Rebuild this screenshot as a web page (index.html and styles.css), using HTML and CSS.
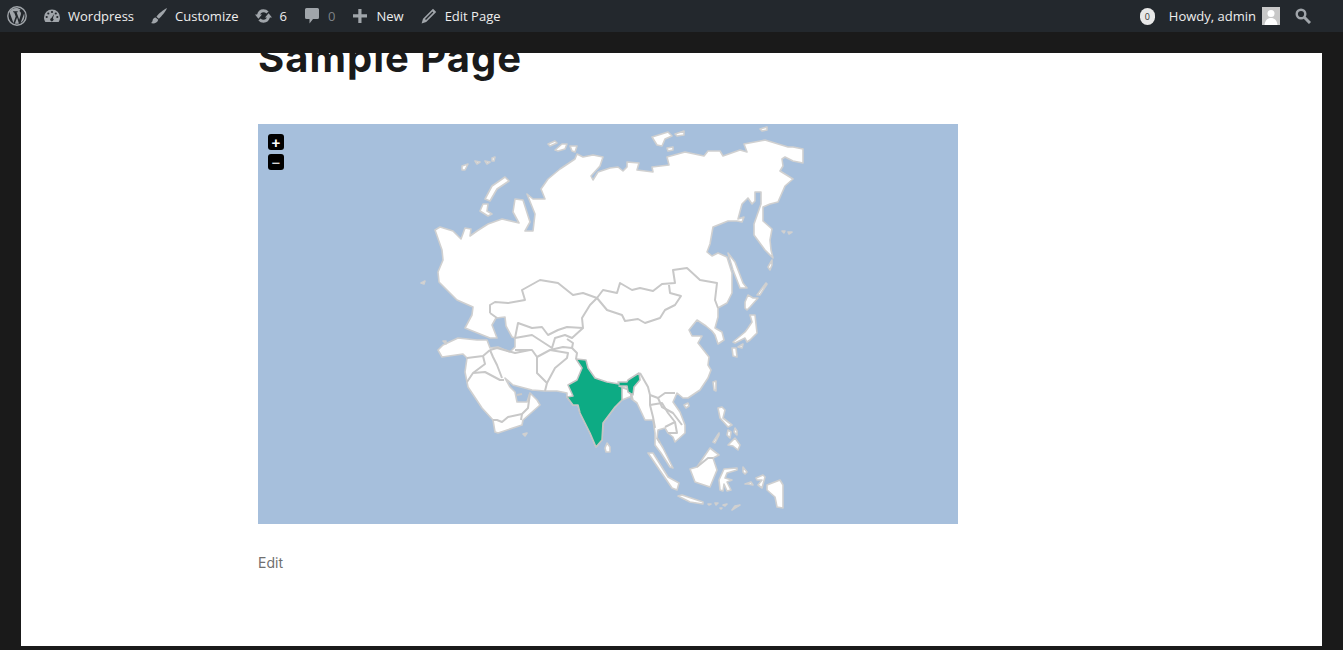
FILE: index.html
```html
<!DOCTYPE html>
<html lang="en">
<head>
    <meta charset="UTF-8">
    <meta name="viewport" content="width=device-width, initial-scale=1.0">
    <title>Sample Page</title>
    <link rel="stylesheet" href="styles.css">
</head>
<body>
    <!-- Admin bar -->
    <div class="adminbar">
        <div class="bar-group">
            <a class="bar-logo">
                <svg class="icon-logo" viewBox="0 0 20 20"><circle cx="10" cy="10" r="9.2" fill="none" stroke="#a0a5aa" stroke-width="1.4"/><path fill="#a0a5aa" d="M2.6 6.6 6.4 17l2.3-6.4-1.6-4.3-1-.1v-.9h4.6v.9l-1.1.1 2.6 7.4 1.5-4.7c.6-1.8.2-2.9-.9-3.6-.4-.4-.3-1.5.9-1.7-1.3-1.100-2.900-1.600-4.700-1.600-2.700 0-5 1.300-6.400 3.500zM17.200 7.200l-3.600 9.700c2.300-1.300 3.800-3.900 3.800-6.700 0-1.100-.1-2.100-.2-3zM10.100 11.400l-2.200 6.200c1.300.4 2.700.3 4-.1z"/></svg>
            </a>
            <a class="bar-item">
                <svg class="icon" viewBox="0 0 16 16"><path fill="#a0a5aa" d="M8 1.500a8 8 0 0 0-8 8c0 1.700.5 3 1.400 4.500h13.200c.9-1.500 1.400-2.800 1.400-4.500a8 8 0 0 0-8-8z"/><g fill="#23282d"><circle cx="8" cy="4" r="1.100"/><circle cx="4.300" cy="5.500" r="1.100"/><circle cx="2.700" cy="9" r="1.100"/><circle cx="13.300" cy="9" r="1.100"/><circle cx="11.800" cy="5.500" r="1.100"/><path d="M10.300 5.800 8.900 10.200a1.700 1.700 0 1 1-1.500-.3z"/></g></svg>
                <span>Wordpress</span>
            </a>
            <a class="bar-item">
                <svg class="icon" viewBox="0 0 17 17"><path fill="#a0a5aa" d="M17 0C13 2 8 6 5.800 9.300l2.600 2.200C11 9 15.500 4 17 0zM5 10.200c-2 .2-3 1.400-3.300 3.200-.2 1.300-.8 2-1.700 2.600 2.500.8 6.700.4 7.700-3.500z"/></svg>
                <span>Customize</span>
            </a>
            <a class="bar-item">
                <svg class="icon icon-update" viewBox="0 0 17 16"><g fill="none" stroke="#a0a5aa" stroke-width="3"><path d="M3.500 7.200C4 4.500 6 2.800 8.500 2.800c1.700 0 3 .7 4 1.800"/><path d="M13.500 8.800C13 11.500 11 13.200 8.500 13.200c-1.700 0-3-.7-4-1.800"/></g><path fill="#a0a5aa" d="M0 6.500h7L3.400 10.800zM17 9.500h-7l3.600-4.300z"/></svg>
                <span>6</span>
            </a>
            <a class="bar-item">
                <svg class="icon" viewBox="0 0 16 16"><path fill="#a0a5aa" d="M2.500 0h11A1.500 1.500 0 0 1 15 1.500v8a1.500 1.500 0 0 1-1.500 1.500H9l-3.500 4.500V11h-3A1.500 1.500 0 0 1 1 9.500v-8A1.500 1.500 0 0 1 2.500 0z"/></svg>
                <span class="muted">0</span>
            </a>
            <a class="bar-item">
                <svg class="icon" viewBox="0 0 16 16"><path fill="#a0a5aa" d="M6.300 1h3.200v5.300H15v3.200H9.500V15H6.300V9.500H1V6.300h5.300z"/></svg>
                <span>New</span>
            </a>
            <a class="bar-item">
                <svg class="icon" viewBox="0 0 16 16"><path fill="#a0a5aa" d="M12 .8 15.200 4 5.200 14 .6 15.400 2 10.800zM11.400 3.600 4 11l1 1 7.400-7.400z"/></svg>
                <span>Edit Page</span>
            </a>
        </div>
        <div class="bar-group">
            <span class="bubble">0</span>
            <span class="howdy">Howdy, admin</span>
            <svg class="avatar" viewBox="0 0 18 18"><rect width="18" height="18" fill="#c8c8c8"/><circle cx="9" cy="6.500" r="3.500" fill="#fff"/><path fill="#fff" d="M2.500 18c.5-4.500 3-7 6.500-7s6 2.500 6.500 7z"/></svg>
            <svg class="icon-search" viewBox="0 0 16 16"><circle cx="6" cy="6" r="4.300" fill="none" stroke="#a0a5aa" stroke-width="2.400"/><path d="M9.500 9.500 15 15" stroke="#a0a5aa" stroke-width="3"/></svg>
        </div>
    </div>

    <!-- Page -->
    <div class="page">
        <div class="entry">
            <h1 class="entry-title">Sample Page</h1>

            <div class="map">
                <div class="zoom zoom-in">+</div>
                <div class="zoom zoom-out">&minus;</div>
                <svg class="map-svg" viewBox="258 124 700 400">
                    <g class="land">
                        <path d="M435 230 440 227 453 231 461 239 465 228 471 229 470 236 477 231 488 224 502 219 519 223 513 212 515 199 523 200 530 222 525 231 533 231 535 214 527 194 533 199 545 199 541 189 548 179 560 169 575 159 577 154 583 157 593 155 603 157 600 166 591 176 593 180 598 172 610 168 618 167 623 171 627 167 627 162 639 163 637 170 653 172 652 167 669 165 667 157 685 152 704 156 708 151 720 151 723 156 740 150 747 152 744 144 765 140 788 147 793 147 803 149 803 163 793 161 785 157 782 159 783 166 780 171 793 179 785 186 778 202 770 204 763 207 763 221 772 229 770 240 771 250 773 258 765 250 754 235 754 224 761 204 761 192 755 192 755 201 752 204 748 198 742 204 738 219 744 217 742 222 737 221 728 221 713 227 710 244 707 252 712 256 718 253 727 257 732 273 732 293 727 303 718 308 718 317 715 328 722 332 724 340 718 344 715 335 712 331 706 326 697 320 689 330 692 336 702 336 698 343 709 357 708 365 711 370 708 378 700 390 688 398 683 398 677 393 673 402 680 412 685 425 685 433 675 442 673 437 668 433 665 428 658 430 657 438 663 448 668 458 673 468 670 467 661 453 655 445 655 433 653 420 645 420 637 403 633 400 632 396 622 400 615 407 603 423 602 440 596 447 590 433 580 413 578 405 573 405 567 397 567 393 557 391 545 391 532 390 513 385 505 378 510 387 515 392 517 402 527 402 530 393 537 400 540 405 523 420 522 425 498 433 495 432 493 420 482 408 468 387 465 372 467 358 463 354 442 357 438 350 443 345 458 338 477 340 487 340 490 348 498 347 510 352 515 347 515 338 512 337 506 326 505 317 496 318 492 325 497 338 490 338 475 332 465 328 472 315 473 307 457 300 450 293 439 282 438 272 443 260 442 250z"/>
                        <!-- arctic islands -->
                        <path d="M485 199 492 186 505 177 509 181 497 189 490 201z"/>
                        <path d="M483 204 488 204 487 211 492 214 488 216 480 211z"/>
                        <path d="M462 166 468 164 465 170 462 170z"/>
                        <path d="M475 161 480 162 477 164z"/>
                        <path d="M485 161 490 162 487 164z"/>
                        <path d="M492 158 495 157 494 161 492 161z"/>
                        <path d="M548 144 555 141 557 143 550 146z"/>
                        <path d="M555 150 562 144 567 144 565 149 558 151z"/>
                        <path d="M570 146 577 146 575 152 572 151z"/>
                        <path d="M652 137 668 132 672 136 665 139 662 146 657 145z"/>
                        <path d="M675 134 684 131 684 135 677 136z"/>
                        <path d="M667 148 673 147 673 150 668 151z"/>
                        <path d="M760 129 767 127 767 130 762 131z"/>
                        <path d="M782 231 785 231 784 233z"/>
                        <path d="M788 232 792 232 789 234z"/>
                        <path d="M421 283 425 281 424 284z"/>
                        <path d="M443 341 446 341 446 344z"/>
                        <!-- japan and sakhalin -->
                        <path d="M728 253 735 262 743 283 747 288 740 288 733 270z"/>
                        <path d="M768 267 772 260 772 265 770 270z"/>
                        <path d="M757 295 766 283 767 284 760 295z"/>
                        <path d="M745 308 745 302 748 295 753 298 758 298 750 307 747 310z"/>
                        <path d="M750 315 755 315 757 333 750 340 747 342 745 338 735 343 733 342 745 332 748 328 752 322z"/>
                        <path d="M732 348 736 348 737 357 733 356z"/>
                        <path d="M738 347 743 344 742 348z"/>
                        <!-- taiwan, hainan, philippines -->
                        <path d="M713 382 716 381 716 391 714 390z"/>
                        <path d="M684 405 688 403 689 406 686 408z"/>
                        <path d="M718 408 722 407 725 410 723 418 732 425 728 427 720 418z"/>
                        <path d="M728 430 731 432 730 438 727 435z"/>
                        <path d="M735 428 737 431 737 435 734 432z"/>
                        <path d="M728 445 735 438 740 445 738 450 733 446z"/>
                        <path d="M713 442 719 433 719 435 715 443z"/>
                        <!-- indonesia -->
                        <path d="M690 469 697 467 710 448 719 455 713 458 717 470 710 487 695 482z"/>
                        <path d="M648 453 653 453 668 477 679 483 677 490 672 488z"/>
                        <path d="M678 496 682 495 703 502 703 504 690 502z"/>
                        <path d="M708 504 711 504 709 505z"/>
                        <path d="M715 503 718 503 716 505z"/>
                        <path d="M720 508 722 508 721 509z"/>
                        <path d="M723 505 727 504 725 506z"/>
                        <path d="M732 510 735 506 740 505 735 508z"/>
                        <path d="M720 490 719 480 724 469 737 468 737 470 727 473 725 478 732 480 727 482 731 490 727 491 724 484 723 491z"/>
                        <path d="M743 467 747 472 745 474 743 472z"/>
                        <path d="M767 485 780 480 783 485 783 508 777 507 775 497 767 490z"/>
                        <path d="M756 478 763 475 765 477 762 488 758 485 762 480 757 480z"/>
                        <path d="M745 484 751 482 753 485 748 484z"/>
                        <!-- small ones near india -->
                        <path d="M607 443 610 447 610 452 606 452 605 448z"/>
                        <path d="M523 434 527 433 525 436z"/>
                    </g>
                    <g class="borders">
                        <path d="M490 313 490 305 495 302 508 303 525 300 522 290 540 280 558 283 573 295 583 293 597 298 603 290 617 293 620 283 632 290 640 288 653 291 662 284 675 283 673 270 687 268 700 280 717 283 715 300 718 308"/>
                        <path d="M490 313 497 318"/>
                        <path d="M597 298 607 310 622 315 625 321 638 319 645 323 660 318 665 310 675 305 681 296 670 293 669 285"/>
                        <path d="M597 298 590 305 582 318 583 328 567 327 558 330 548 335 542 327 532 328 518 323 515 338"/>
                        <path d="M515 338 532 335 552 348 555 338 565 335 572 338 583 328"/>
                        <path d="M515 350 532 350 537 357 550 350 563 347 572 348 573 343 567 339"/>
                        <path d="M572 348 577 353 576 359"/>
                        <path d="M537 357 537 373 547 383 545 391"/>
                        <path d="M550 350 568 353 567 358 555 368 547 383"/>
                        <path d="M490 350 493 357 497 365 502 378"/>
                        <path d="M490 350 497 348 515 353 530 350"/>
                        <path d="M467 358 483 356 490 350"/>
                        <path d="M483 356 485 364 473 373 467 382"/>
                        <path d="M473 373 485 372 500 380 504 380"/>
                        <path d="M493 420 497 420 502 422 508 417 522 414 528 408 530 393"/>
                        <path d="M522 414 521 420"/>
                        <path d="M517 395 522 394"/>
                        <path d="M621 387 630 390 632 400"/>
                        <path d="M640 373 648 387 650 395 658 398 665 393 675 393"/>
                        <path d="M650 395 650 405 653 417 655 428"/>
                        <path d="M650 405 662 403 668 413 675 422 665 427"/>
                        <path d="M658 398 662 407 673 413 682 425"/>
                        <path d="M675 422 677 433 668 433"/>
                        <path d="M657 438 660 443"/>
                        <path d="M697 467 708 458 713 458"/>
                    </g>
                    <g class="india">
                        <path d="M576 359 586 360 588 368 595 378 607 382 619 384 618 382 627 382 628 380 639 373 640 380 634 387 633 395 628 392 627 386 619 386 622 387 622 400 615 407 603 423 602 440 596 447 590 433 580 413 578 405 573 405 567 397 573 396 568 385 577 380 582 368z"/>
                    </g>
                </svg>
            </div>

            <p class="edit-link">Edit</p>
        </div>
    </div>
</body>
</html>
```

FILE: styles.css
```css
html, body {
    height: 100%;
}
body {
    margin: 0;
    height: 650px;
    overflow: hidden;
    background: #1a1a1a;
    font-family: "Open Sans", sans-serif;
}

/* admin bar */
.adminbar {
    display: flex;
    justify-content: space-between;
    height: 32px;
    background: #23282d;
    color: #eee;
    font-size: 13px;
}
.bar-group {
    display: flex;
    align-items: center;
}
.bar-logo {
    display: flex;
    padding-left: 7px;
    margin-right: 17px;
}
.icon-logo {
    width: 20px;
    height: 20px;
}
.bar-item {
    display: flex;
    align-items: center;
    gap: 8px;
    margin-right: 17px;
}
.icon {
    width: 16px;
    height: 16px;
}
.icon-update {
    margin-left: -1px;
    width: 17px;
}
.muted {
    color: #7d8287;
}
.bubble {
    width: 15px;
    height: 17px;
    margin-right: 14px;
    border-radius: 8px;
    background: #e8e8e8;
    color: #333;
    font-size: 9px;
    line-height: 18px;
    text-align: center;
}
.avatar {
    width: 18px;
    height: 18px;
    margin-left: 6px;
}
.icon-search {
    width: 16px;
    height: 16px;
    margin-left: 15px;
    margin-right: 32px;
}

/* page */
.page {
    height: 593px;
    margin: 21px 21px 0;
    overflow: hidden;
    background: #fff;
}
.entry {
    padding-left: 237px;
}
.entry-title {
    margin: -22px 0 0;
    height: 93px;
    color: #1a1a1a;
    font-family: "Inter", sans-serif;
    font-size: 40px;
    font-weight: 700;
    letter-spacing: 1px;
    line-height: 53px;
}
.map {
    position: relative;
    width: 700px;
    height: 400px;
    background: #a6bfdc;
}
.map-svg {
    display: block;
    width: 700px;
    height: 400px;
}
.land path {
    fill: #fff;
    stroke: #d0d0d0;
    stroke-width: 1.6;
    stroke-linejoin: round;
}
.borders path {
    fill: none;
    stroke: #c8c8c8;
    stroke-width: 2;
    stroke-linejoin: round;
}
.india path {
    fill: #0dab84;
    stroke: #c4c4c4;
    stroke-width: 1.6;
    stroke-linejoin: round;
}
.zoom {
    position: absolute;
    left: 10px;
    width: 16px;
    height: 16px;
    border-radius: 3px;
    background: #000;
    color: #fff;
    font-family: "Liberation Sans", sans-serif;
    font-size: 15px;
    font-weight: 700;
    line-height: 17px;
    text-align: center;
}
.zoom-in {
    top: 10px;
}
.zoom-out {
    top: 30px;
    font-weight: 400;
}
.edit-link {
    margin: 31px 0 0;
    color: #707070;
    font-family: "Inter", sans-serif;
    font-size: 14px;
    line-height: 16px;
}
```
